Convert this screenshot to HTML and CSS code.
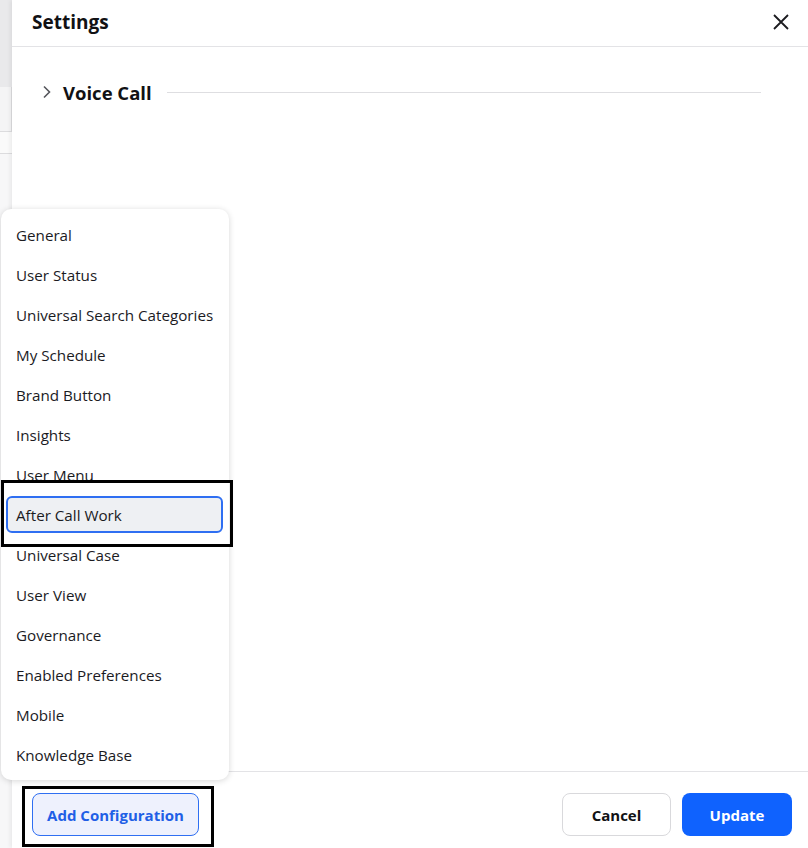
FILE: index.html
```html
<!DOCTYPE html>
<html lang="en">
<head>
  <meta charset="UTF-8">
  <title>Settings</title>
  <link rel="stylesheet" href="styles.css">
</head>
<body>
  <!-- page behind the drawer -->
  <div class="backdrop">
    <div class="backdrop-top"></div>
    <div class="backdrop-row"></div>
    <div class="backdrop-row short"></div>
  </div>

  <div class="panel">
    <div class="panel-header">
      <h1 class="panel-title">Settings</h1>
      <button class="close-btn" aria-label="Close">
        <svg width="18" height="18" viewBox="0 0 18 18"><path d="M2 2 L16 16 M16 2 L2 16" stroke="#1b1b1f" stroke-width="1.8" fill="none"/></svg>
      </button>
    </div>

    <div class="panel-body">
      <div class="section-row">
        <svg class="chevron" width="10" height="14" viewBox="0 0 10 14"><path d="M2 1.5 L7.5 7 L2 12.5" stroke="#55565c" stroke-width="1.6" fill="none"/></svg>
        <span class="section-title">Voice Call</span>
        <span class="section-line"></span>
      </div>
    </div>

    <div class="panel-footer">
      <button class="btn btn-add">Add Configuration</button>
      <div class="footer-right">
        <button class="btn btn-cancel">Cancel</button>
        <button class="btn btn-update">Update</button>
      </div>
    </div>
  </div>

  <!-- config dropdown -->
  <ul class="menu">
    <li class="menu-item">General</li>
    <li class="menu-item">User Status</li>
    <li class="menu-item">Universal Search Categories</li>
    <li class="menu-item">My Schedule</li>
    <li class="menu-item">Brand Button</li>
    <li class="menu-item">Insights</li>
    <li class="menu-item">User Menu</li>
    <li class="menu-item active">After Call Work</li>
    <li class="menu-item">Universal Case</li>
    <li class="menu-item">User View</li>
    <li class="menu-item">Governance</li>
    <li class="menu-item">Enabled Preferences</li>
    <li class="menu-item">Mobile</li>
    <li class="menu-item">Knowledge Base</li>
  </ul>

  <!-- annotation boxes -->
  <div class="mark mark-item"></div>
  <div class="mark mark-add"></div>
</body>
</html>
```

FILE: styles.css
```css
body {
  margin: 0;
  font-family: "Open Sans", "Noto Sans", sans-serif;
  color: #1b1b1f;
  display: flex;
  height: 100vh;
  overflow: hidden;
  background: #fff;
}

/* strip of the page behind */
.backdrop {
  width: 12px;
  flex-shrink: 0;
  background: #f7f7f8;
  display: flex;
  flex-direction: column;
}
.backdrop-top {
  height: 87px;
  background: #e9e9eb;
}
.backdrop-row {
  height: 44px;
  border-bottom: 1px solid #dcdcde;
  border-right: 1px solid #dcdcde;
  background: #f4f4f5;
}
.backdrop-row.short {
  height: 21px;
  border-right: none;
  background: #fafafa;
}

.panel {
  flex: 1;
  display: flex;
  flex-direction: column;
  background: #fff;
  box-shadow: -2px 0 4px rgba(0, 0, 0, 0.06);
}
.panel-header {
  height: 46px;
  border-bottom: 1px solid #e3e3e6;
  display: flex;
  align-items: center;
  justify-content: space-between;
  padding: 0 18px 0 20px;
}
.panel-title {
  margin: 0 0 2px;
  font-size: 19px;
  font-weight: 700;
  color: #111114;
}
.close-btn {
  background: none;
  border: none;
  padding: 0;
  display: flex;
  cursor: pointer;
  margin-top: -3px;
}

.panel-body {
  flex: 1;
  padding: 30px 47px 0 30px;
}
.section-row {
  display: flex;
  align-items: center;
  height: 30px;
}
.chevron {
  margin-right: 11px;
}
.section-title {
  font-size: 18.5px;
  font-weight: 700;
  color: #111114;
  margin-right: 15px;
}
.section-line {
  flex: 1;
  height: 1px;
  background: #dedee1;
}

.panel-footer {
  height: 77px;
  border-top: 1px solid #e3e3e6;
  display: flex;
  justify-content: space-between;
  padding: 21px 16px 0 20px;
  box-sizing: border-box;
}
.footer-right {
  display: flex;
  gap: 11px;
}
.btn {
  height: 43px;
  border-radius: 8px;
  font-family: inherit;
  font-size: 15px;
  font-weight: 700;
  cursor: pointer;
  box-sizing: border-box;
}
.btn-add {
  width: 167px;
  border: 1px solid #2f6ff2;
  background: #eef1fd;
  color: #1f5fe6;
}
.btn-cancel {
  width: 109px;
  border: 1px solid #d9d9dc;
  background: #fff;
  color: #111114;
}
.btn-update {
  width: 110px;
  border: none;
  background: #0f62fe;
  color: #fff;
}

/* dropdown */
.menu {
  position: absolute;
  left: 1px;
  top: 209px;
  width: 228px;
  margin: 0;
  padding: 6px 0 5px;
  list-style: none;
  background: #fff;
  border-radius: 10px;
  box-shadow: 0 1px 6px rgba(0, 0, 0, 0.16);
}
.menu-item {
  height: 40px;
  line-height: 41px;
  padding: 0 15px;
  font-size: 15.2px;
  color: #1b1b1f;
  white-space: nowrap;
}
.menu-item.active {
  margin: 1px 6px 2px 5px;
  padding: 0 8px;
  height: 37px;
  line-height: 35px;
  border: 2px solid #2f6ff2;
  border-radius: 6px;
  background: #eef0f3;
  box-sizing: border-box;
}

/* black annotation boxes */
.mark {
  position: absolute;
  border: 3px solid #000;
  box-sizing: border-box;
}
.mark-item {
  left: 1px;
  top: 480px;
  width: 232px;
  height: 67px;
}
.mark-add {
  left: 22px;
  top: 786px;
  width: 192px;
  height: 61px;
}
```
